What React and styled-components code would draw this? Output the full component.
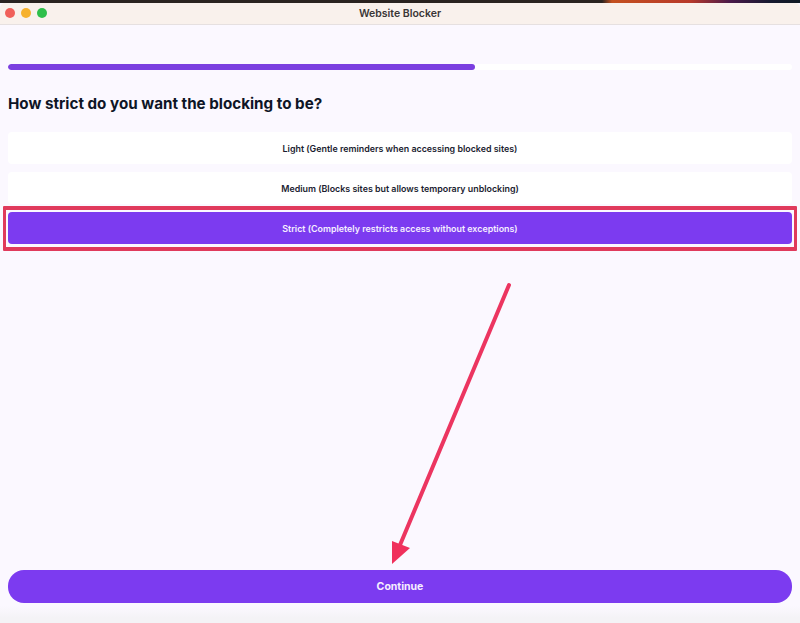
import React from "react";
import styled, { createGlobalStyle } from "styled-components";

const Global = createGlobalStyle`
  html, body { margin: 0; padding: 0; background: #fbf8ff; }
  * { box-sizing: border-box; }
`;

const Screen = styled.div`
  position: relative;
  width: 800px;
  height: 623px;
  overflow: hidden;
  display: flex;
  flex-direction: column;
  font-family: Inter, "Liberation Sans", sans-serif;
  background: linear-gradient(to bottom, #fbf8ff 0, #fbf8ff 606px, #f4f3f6 618px);
`;

const Wallpaper = styled.div`
  height: 3px;
  flex: none;
  background: linear-gradient(to right, #2a2320 0, #2a2320 602px, #c4501f 612px, #b8392a 690px, #4a1a4a 730px, #161a30 770px, #0f1a24 800px);
`;

const TitleBar = styled.header`
  position: relative;
  height: 22px;
  flex: none;
  display: flex;
  align-items: center;
  justify-content: center;
  background: #f9f1ec;
  border-bottom: 1px solid #e6e0e0;
  border-radius: 5px 5px 0 0;
`;

const Lights = styled.div`
  position: absolute;
  left: 5px;
  top: 5px;
  display: flex;
  gap: 6px;
`;

const Light = styled.span`
  width: 10px;
  height: 10px;
  border-radius: 50%;
  background: ${(p) => p.$color};
`;

const WindowTitle = styled.h1`
  margin: 0;
  font-size: 10.5px;
  font-weight: 600;
  color: #3a3636;
`;

const Content = styled.main`
  flex: 1;
  display: flex;
  flex-direction: column;
  padding: 39px 8px 20px;
`;

const Track = styled.div`
  height: 6px;
  flex: none;
  border-radius: 3px;
  background: #ffffff;
  overflow: hidden;
`;

const Fill = styled.div`
  height: 100%;
  border-radius: 3px;
  background: #7b3fe0;
`;

const Question = styled.h2`
  margin: 23px 0 17px;
  height: 22px;
  font-size: 15.2px;
  line-height: 22px;
  font-weight: 700;
  color: #0e1526;
`;

const Options = styled.div`
  display: flex;
  flex-direction: column;
  gap: 8px;
`;

const Option = styled.button`
  position: relative;
  height: 32px;
  width: 100%;
  border: none;
  border-radius: 4px;
  padding: 0;
  font-family: inherit;
  font-size: 8.9px;
  font-weight: 600;
  color: ${(p) => (p.$selected ? "#f6efff" : "#1a1c30")};
  background: ${(p) => (p.$selected ? "#7c3bf0" : "#ffffff")};
`;

const Highlight = styled.span`
  position: absolute;
  left: -5px;
  right: -5px;
  top: -6px;
  bottom: -7px;
  border: solid #e03a5c;
  border-width: 4px 3px 4px 3px;
  border-radius: 1px;
  pointer-events: none;
`;

const Spacer = styled.div`
  flex: 1;
`;

const ContinueButton = styled.button`
  height: 33px;
  width: 100%;
  flex: none;
  border: none;
  border-radius: 16px;
  font-family: inherit;
  font-size: 10.5px;
  font-weight: 700;
  color: #f6efff;
  background: #7c3bf0;
`;

const Arrow = styled.svg`
  position: absolute;
  left: 0;
  top: 0;
  pointer-events: none;
`;

const options = [
  "Light (Gentle reminders when accessing blocked sites)",
  "Medium (Blocks sites but allows temporary unblocking)",
  "Strict (Completely restricts access without exceptions)",
];

export default function App() {
  return (
    <Screen>
      <Global />
      <Wallpaper />
      <TitleBar>
        <Lights>
          <Light $color="#f0605a" />
          <Light $color="#f6b12e" />
          <Light $color="#2fbf4a" />
        </Lights>
        <WindowTitle>Website Blocker</WindowTitle>
      </TitleBar>
      <Content>
        <Track>
          <Fill style={{ width: `${(467 / 784) * 100}%` }} />
        </Track>
        <Question>How strict do you want the blocking to be?</Question>
        <Options>
          {options.map((label, i) => (
            <Option key={label} $selected={i === 2}>
              {label}
              {i === 2 && <Highlight />}
            </Option>
          ))}
        </Options>
        <Spacer />
        <ContinueButton>Continue</ContinueButton>
      </Content>
      <Arrow width="800" height="623" viewBox="0 0 800 623">
        <line x1="509" y1="285" x2="400" y2="545" stroke="#ec3560" strokeWidth="4" strokeLinecap="round" />
        <polygon points="392,541 410,548 392,564" fill="#f0305c" />
      </Arrow>
    </Screen>
  );
}
